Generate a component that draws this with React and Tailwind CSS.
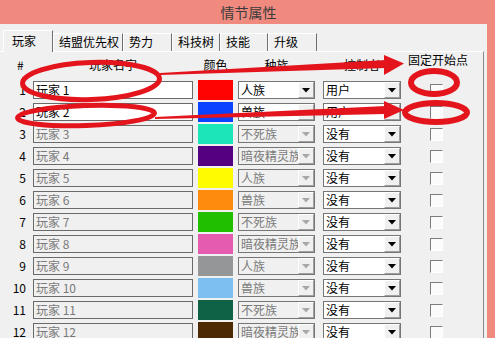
import React from "react";

const colors = ["#ff0303", "#0a42ff", "#1ce6b9", "#540081", "#fffc01", "#fe8a0e", "#20c000", "#e55bb0", "#959697", "#7ebff1", "#106246", "#4e2a04"];
const races = ["人族", "兽族", "不死族", "暗夜精灵族"];

const tabs = [
  { label: "结盟优先权", w: "w-[70px]" },
  { label: "势力", w: "w-[49px]" },
  { label: "科技树", w: "w-[48px]" },
  { label: "技能", w: "w-[48px]" },
  { label: "升级", w: "w-[49px]" },
];

function Arrow({ disabled }) {
  return (
    <div className="w-[16px] h-full bg-[#f0f0f0] border border-t-white border-l-white border-b-[#a0a0a0] border-r-[#a0a0a0] flex items-center justify-center">
      <svg width="8" height="5" viewBox="0 0 8 5">
        <path d="M0 0 H8 L4 4.5 Z" fill={disabled ? "#a8a8a8" : "#000"} />
      </svg>
    </div>
  );
}

function Select({ text, disabled, w }) {
  return (
    <div className={`${w} h-[18px] border border-[#767676] flex ${disabled ? "bg-[#f0f0f0] text-[#7a7a7a]" : "bg-white text-black"}`}>
      <div className="flex-1 overflow-hidden whitespace-nowrap pl-[2px] leading-[16px]">{text}</div>
      <Arrow disabled={disabled} />
    </div>
  );
}

export default function App() {
  const rows = Array.from({ length: 12 }, (_, i) => i);
  return (
    <div
      className="relative w-[495px] h-[338px] overflow-hidden bg-[#f08a7f] flex flex-col text-[12px]"
      style={{ fontFamily: "'Noto Sans CJK SC', 'Noto Sans', sans-serif" }}
    >
      <div className="h-[24px] shrink-0 flex items-center justify-center text-[14px] text-[#3a3a3a] pl-[2px]">情节属性</div>
      <div className="flex-1 flex pr-[8px]">
        <div className="w-[487px] bg-[#f0f0f0] flex flex-col">
          <div className="h-[27px] flex items-end pl-[3px]">
            <div className="relative z-10 w-[50px] h-[22px] -mb-[1px] bg-[#f0f0f0] border-l border-t border-white border-r border-r-[#6f6f6f] pl-[8px] pt-[2px] leading-[16px] text-black">玩家</div>
            {tabs.map((t) => (
              <div key={t.label} className={`${t.w} h-[18px] border-l border-t border-white border-r border-r-[#6f6f6f] pl-[5px] leading-[16px] text-black`}>
                {t.label}
              </div>
            ))}
          </div>
          <div className="flex-1 w-[484px] border-t border-white border-r border-r-[#8a8a8a]">
            <div className="h-[27px] flex items-start text-black leading-[16px]">
              <div className="w-[33px] pl-[17px] pt-[5px]">#</div>
              <div className="w-[160px] text-center pt-[5px]">玩家名字</div>
              <div className="ml-[5px] w-[35px] text-center pt-[5px]">颜色</div>
              <div className="ml-[5px] w-[77px] text-center pt-[5px]">种族</div>
              <div className="ml-[8px] w-[78px] text-center pt-[5px]">控制者</div>
              <div className="ml-[7px] pt-0 whitespace-nowrap">固定开始点</div>
            </div>
            {rows.map((i) => {
              const enabled = i < 2;
              return (
                <div key={i} className="h-[22px] flex items-center leading-[16px]">
                  <div className="w-[26px] text-right text-black">{i + 1}</div>
                  <div className={`ml-[7px] w-[160px] h-[18px] border border-[#6a6a6a] pl-[2px] ${enabled ? "bg-white text-black" : "bg-[#f0f0f0] text-[#7a7a7a]"}`}>
                    玩家 {i + 1}
                  </div>
                  <div className="ml-[5px] w-[35px] h-[20px]" style={{ backgroundColor: colors[i] }} />
                  <div className="ml-[5px]">
                    <Select text={races[i % 4]} disabled={!enabled} w="w-[77px]" />
                  </div>
                  <div className="ml-[8px]">
                    <Select text={enabled ? "用户" : "没有"} disabled={false} w="w-[78px]" />
                  </div>
                  <div className="ml-[29px] w-[13px] h-[13px] border-t border-l border-[#7c7c7c] border-b border-r border-b-white border-r-white bg-[#fbfbfb]" />
                </div>
              );
            })}
          </div>
        </div>
      </div>
      <svg className="absolute left-0 top-0 pointer-events-none" width="495" height="338" viewBox="0 0 495 338">
        <g fill="none" stroke="#e3141b">
          <ellipse cx="91" cy="81" rx="68.5" ry="18.5" strokeWidth="5" transform="rotate(-2 91 81)" />
          <ellipse cx="86" cy="115.5" rx="68.5" ry="10" strokeWidth="5" transform="rotate(-2 86 115.5)" />
          <ellipse cx="434" cy="82.5" rx="23" ry="11.5" strokeWidth="6" />
          <ellipse cx="436" cy="112.5" rx="31" ry="9.5" strokeWidth="6" />
        </g>
        <g fill="#e3141b">
          <polygon points="160,73 386,60 386,68 160,75" />
          <polygon points="384,55 404,63.5 384,75" />
          <polygon points="155,117 386,106 386,114 155,119" />
          <polygon points="384,101 404,110 384,119" />
        </g>
      </svg>
    </div>
  );
}
